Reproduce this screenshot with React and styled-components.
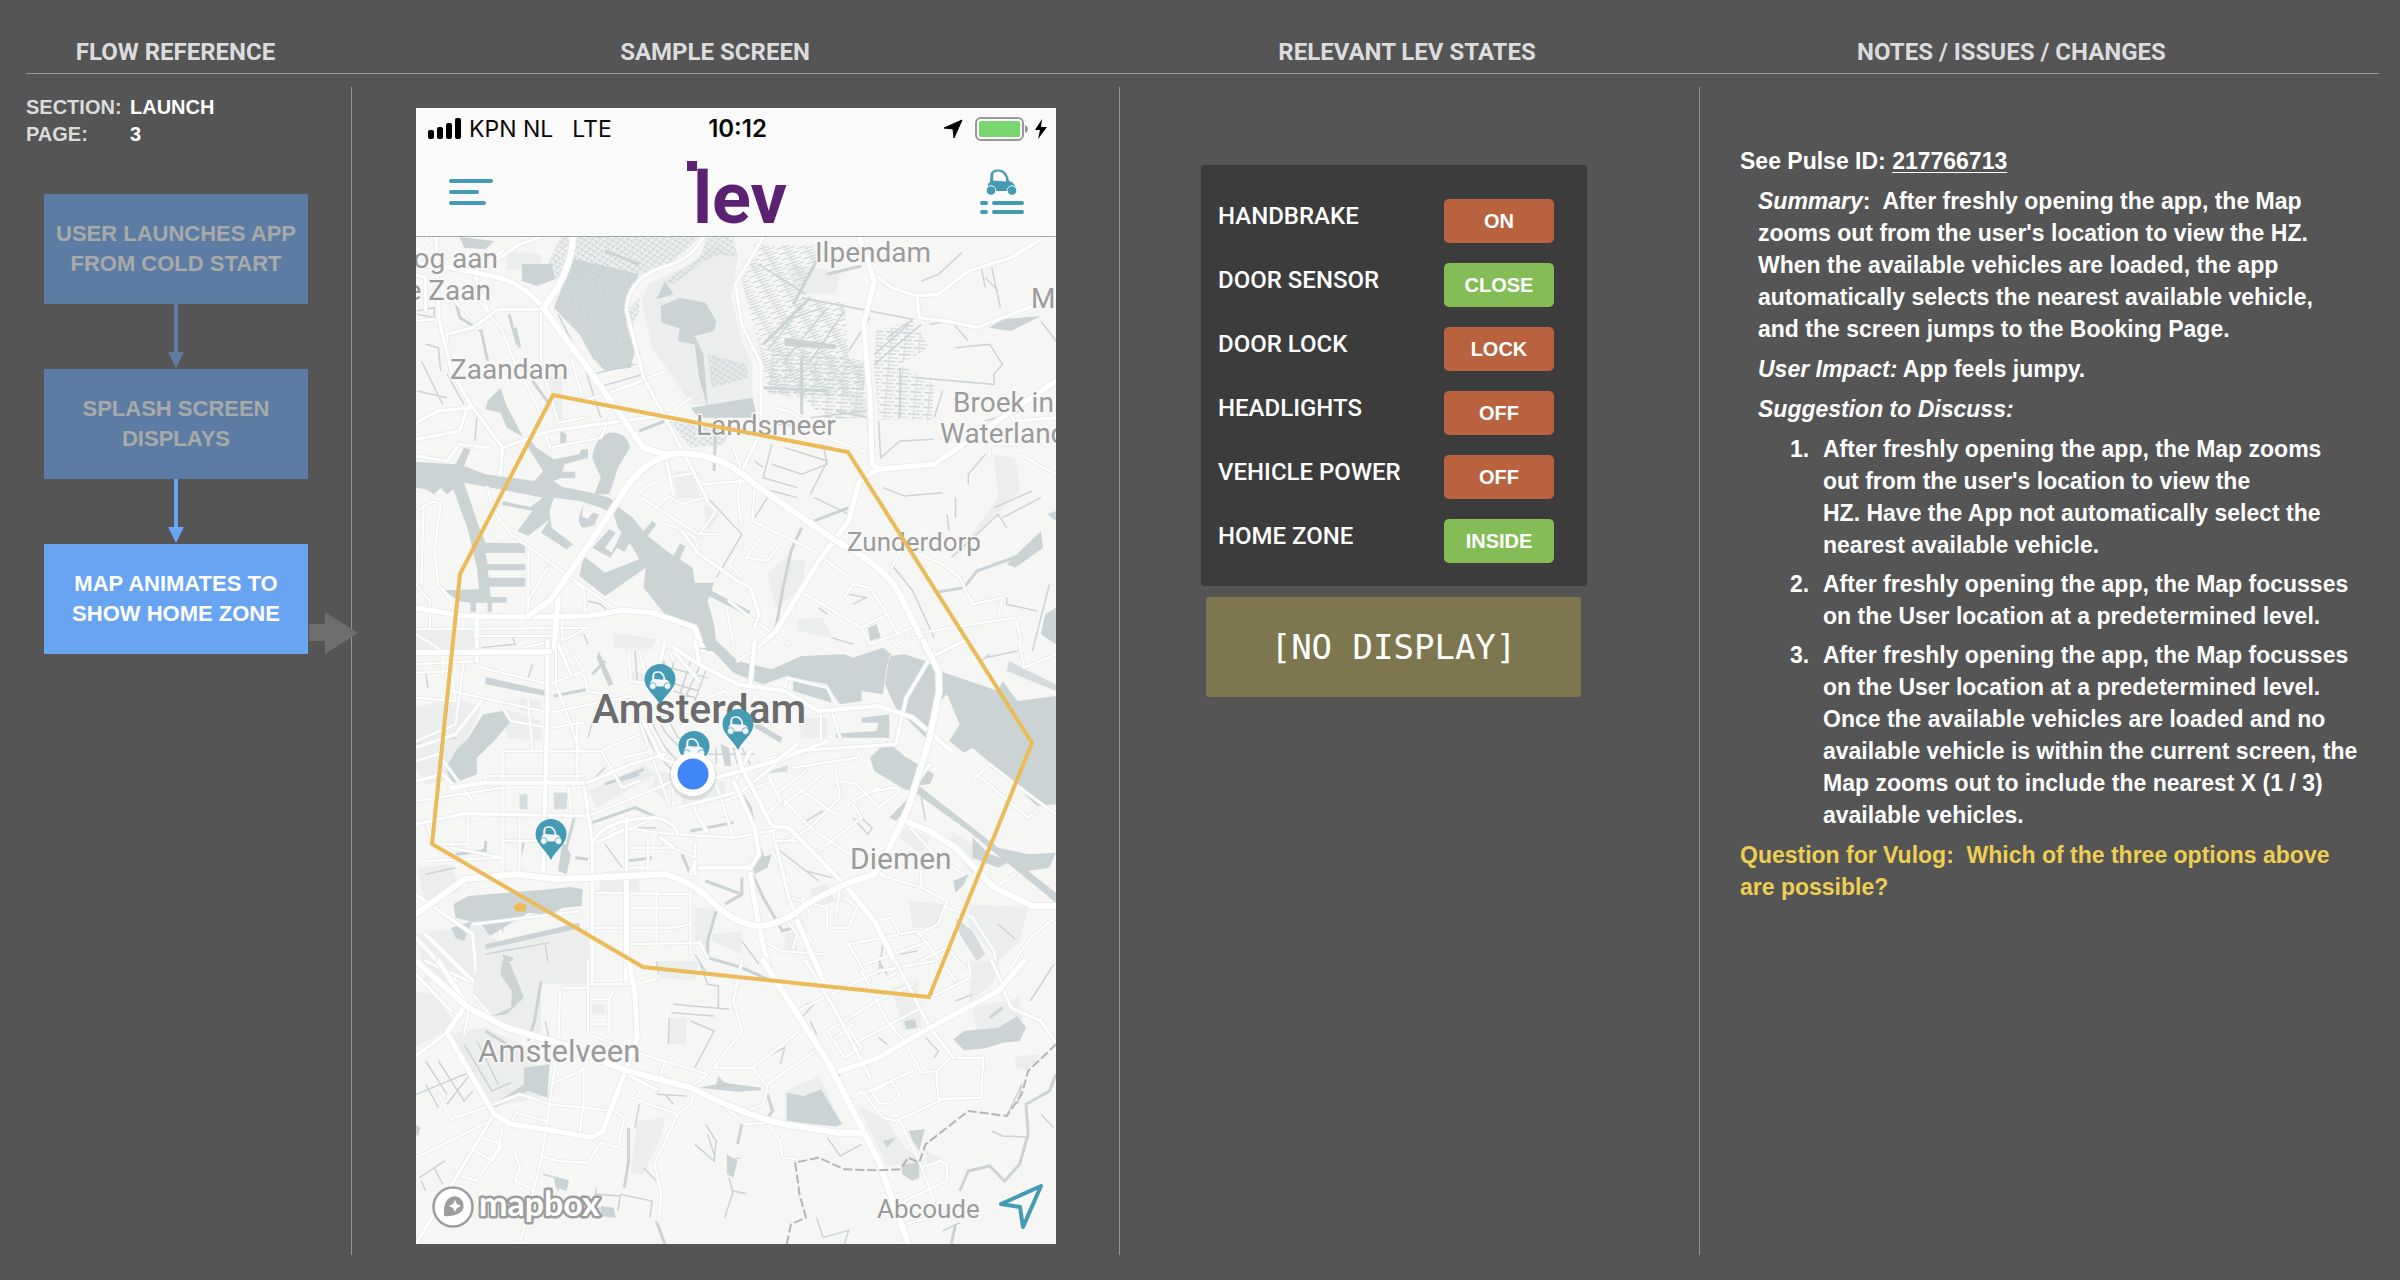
import React from "react";
import styled, { createGlobalStyle } from "styled-components";

const helvetica = `"Liberation Sans", Arial, sans-serif`;
const din = `Roboto, "Liberation Sans", sans-serif`;
const teal = "#459bb3";

const GlobalStyle = createGlobalStyle`
  *, *::before, *::after { box-sizing: border-box; }
  body { margin: 0; background: #555555; color: #ffffff; font-family: ${helvetica}; }
  h2, p, ol, ul, dl, dt, dd { margin: 0; padding: 0; }
  ul, ol { list-style: none; }
  svg { display: block; }
`;

const Page = styled.div`
  display: flex;
  flex-direction: column;
  min-height: 100vh;
  padding-bottom: 26px;
`;

const columns = `351fr 768fr 580fr 701fr`;

const HeaderRow = styled.header`
  position: relative;
  display: grid;
  grid-template-columns: ${columns};
  align-items: end;
  height: 74px;
  &::after {
    content: "";
    position: absolute;
    left: 26px;
    right: 21px;
    bottom: 0;
    height: 1px;
    background: #9b9b9b;
  }
`;

const Heading = styled.h2`
  padding: 0 ${(p) => p.$shift || 0}px 7px 0;
  font: 700 24px/30px ${din};
  color: #dcdcde;
  text-align: center;
  white-space: nowrap;
`;

const Columns = styled.main`
  display: grid;
  grid-template-columns: ${columns};
  flex: 1;
  margin-top: 13px;
`;

const Column = styled.section`
  min-width: 0;
  & + & {
    border-left: 1px solid #949494;
  }
`;

const FlowColumn = styled(Column)`
  padding: 7px 43px 0 26px;
`;
const ScreenColumn = styled(Column)`
  padding: 21px 62px 11px 64px;
`;
const StateColumn = styled(Column)`
  padding: 78px 112px 0 81px;
`;
const NotesColumn = styled(Column)`
  padding: 58px 40px 0;
`;

/* ---------- Flow reference ---------- */

const Meta = styled.dl`
  display: grid;
  grid-template-columns: 104px 1fr;
  font: 700 20px/27px ${helvetica};
  dt { color: #dcdcde; }
`;

const Flow = styled.div`
  display: flex;
  flex-direction: column;
  margin: 46px 0 0 18px;
`;

const Step = styled.div`
  position: relative;
  display: flex;
  align-items: center;
  justify-content: center;
  height: 110px;
  background: ${(p) => (p.$active ? "#69a4f3" : "#5d7ca4")};
  color: ${(p) => (p.$active ? "#ffffff" : "#a9a9a9")};
  font: 700 22px/30px ${helvetica};
  text-align: center;
`;

const DownArrow = styled.svg`
  align-self: center;
  width: 16px;
  height: 65px;
  fill: ${(p) => (p.$active ? "#69a4f3" : "#5d7ca4")};
`;

const NextArrow = styled.svg`
  position: absolute;
  left: calc(100% + 1px);
  bottom: 0;
  width: 49px;
  height: 42px;
  fill: #6e6e6e;
`;

/* ---------- Phone ---------- */

const Phone = styled.div`
  max-width: 640px;
  background: #fafafa;
  color: #0a0a0a;
`;

const StatusBar = styled.div`
  display: grid;
  grid-template-columns: 1fr auto 1fr;
  align-items: center;
  height: 41px;
  padding: 0 9px 0 12px;
  font: 400 23px/30px Inter, ${helvetica};
`;

const StatusGroup = styled.div`
  display: flex;
  align-items: center;
  gap: ${(p) => p.$gap}px;
  justify-content: ${(p) => (p.$end ? "flex-end" : "flex-start")};
`;

const Carrier = styled.span`
  margin-right: 12px;
`;

const Clock = styled.span`
  font-size: 24px;
  font-weight: 600;
`;

const AppBar = styled.div`
  display: grid;
  grid-template-columns: 1fr auto 1fr;
  align-items: center;
  height: 88px;
  padding: 0 30px 0 32px;
  border-bottom: 1px solid #a3a8a3;
`;

const IconButton = styled.button`
  display: block;
  justify-self: ${(p) => p.$side || "start"};
  padding: 0;
  border: 0;
  background: none;
`;

const Brand = styled.div`
  position: relative;
  padding: 12px 0 0 6px;
  font: 700 72px/68px ${din};
  color: #5c2272;
  &::before {
    content: "";
    position: absolute;
    left: 0;
    top: 8px;
    width: 10px;
    height: 10px;
    background: #5c2272;
  }
`;

const MapFrame = styled.div`
  position: relative;
  overflow: hidden;
`;

const MapSvg = styled.svg`
  width: 100%;
  height: auto;
  path { vector-effect: non-scaling-stroke; }
  .road { fill: none; stroke: #ffffff; stroke-linejoin: round; stroke-linecap: round; }
  .case { fill: none; stroke: #e9edeb; stroke-linejoin: round; stroke-linecap: round; }
  .water { fill: #cbd3d5; }
  .canal { fill: none; stroke: #cbd3d5; }
  .park { fill: #eceeed; }
  text { font-family: ${din}; paint-order: stroke; stroke: #f8f8f7; stroke-width: 3px; stroke-linejoin: round; }
`;

const Wordmark = styled.text`
  && {
    font-family: Lato, sans-serif;
    stroke: #9d9d9d;
    stroke-width: 5px;
  }
`;

const LocateButton = styled(IconButton)`
  position: absolute;
  right: 12px;
  bottom: 13px;
`;

/* ---------- States ---------- */

const Panel = styled.ul`
  display: flex;
  flex-direction: column;
  gap: 20px;
  padding: 34px 33px 23px 17px;
  background: #3c3c3c;
  border-radius: 3px;
`;

const StateRow = styled.li`
  display: flex;
  justify-content: space-between;
  align-items: flex-start;
`;

const StateName = styled.label`
  font: 500 24px/34px ${din};
  white-space: nowrap;
`;

const StateButton = styled.button`
  width: 110px;
  height: 44px;
  padding: 0;
  border: 0;
  border-radius: 5px;
  background: ${(p) => (p.$ok ? "#84bd56" : "#b86240")};
  color: #ffffff;
  font: 700 20px/27px ${helvetica};
`;

const Display = styled.div`
  display: flex;
  align-items: center;
  justify-content: center;
  height: 100px;
  margin: 11px 6px 0 5px;
  background: #7e764f;
  border-radius: 3px;
  font: 400 34px/40px "DejaVu Sans Mono", "Liberation Mono", monospace;
`;

/* ---------- Notes ---------- */

const Notes = styled.div`
  display: flex;
  flex-direction: column;
  gap: 8px;
  font: 700 23px/32px ${helvetica};
`;

const Indented = styled.p`
  padding-left: 18px;
`;

const PulseLink = styled.a`
  color: inherit;
  text-decoration: underline;
  text-decoration-thickness: 1px;
  text-underline-offset: 3px;
`;

const Options = styled.ol`
  display: flex;
  flex-direction: column;
  gap: 7px;
  padding-left: 50px;
  counter-reset: option;
  li {
    display: grid;
    grid-template-columns: 33px 1fr;
    counter-increment: option;
  }
  li::before {
    content: counter(option) ".";
  }
`;

const Question = styled.p`
  color: #edcf52;
`;

/* ---------- Drawings ---------- */

const Car = ({ fill, gap }) => (
  <g fill={fill}>
    <path
      fillRule="evenodd"
      d="M3 13 L3.500 5 Q5 .5 11 .5 Q18 0 21 8 L22 12 Q27 13 28.500 18 V22 H.5 Q0 14 3 13Z M6 11.500 L6.500 4 Q8 2.500 11 2.500 Q16 2 19 9 V12.500Z"
    />
    <circle cx="4" cy="21.500" r="4.800" stroke={gap} />
    <circle cx="25" cy="21.500" r="4.800" stroke={gap} />
  </g>
);

const Roads = ({ d, w = 3 }) => (
  <>
    <path className="case" d={d} strokeWidth={w + 2} />
    <path className="road" d={d} strokeWidth={w} />
  </>
);

const Pin = ({ x, y }) => (
  <g transform={`translate(${x} ${y})`}>
    <path
      d="M0 0 C-4 -9 -15.500 -16 -15.500 -25.500 A15.500 15.500 0 0 1 15.500 -25.500 C15.500 -16 4 -9 0 0Z"
      fill={teal}
    />
    <g transform="translate(-10 -34) scale(.7)">
      <Car fill="#f2f6f7" gap={teal} />
    </g>
  </g>
);

const labels = [
  ["og aan", 82, 31, 28, "end"],
  ["e Zaan", 75, 63, 28, "end"],
  ["Zaandam", 34, 142, 28],
  ["Landsmeer", 280, 198, 28],
  ["Ilpendam", 399, 25, 28],
  ["Mo", 615, 71, 28],
  ["Broek in", 537, 175, 28],
  ["Waterland", 524, 206, 28],
  ["Zunderdorp", 431, 314, 26],
  ["Diemen", 434, 632, 30],
  ["Amstelveen", 62, 825, 31],
  ["Abcoude", 461, 981, 26],
];

const North = () => (
  <g transform="translate(-16 -6) scale(.4273 .3333)">
    <path className="park" d="M565 210 L580 160 680 100 740 40 790 80 775 200 800 330 825 400 825 520 750 530 680 520 640 440 590 350Z M900 100 L1030 120 1020 190 930 190Z M1390 670 L1440 680 1450 780 1290 1000 1400 800Z M930 1165 L990 1160 1010 1220 930 1200Z M250 60 L330 70 330 100 250 120Z M350 430 L380 440 380 580 360 560Z M1050 500 L1095 500 1095 560 1060 560Z M37 1195 L180 1195 180 1260 37 1260Z M500 1205 L600 1225 590 1255 500 1250Z M860 1030 L900 980 950 990 940 1070 880 1130Z M640 720 L690 720 700 800 650 800Z M710 820 L750 850 720 900Z" />
    <path d="M400 80 L560 130 530 210 530 280 550 360 540 410 480 420 450 380 420 310 360 230 395 120Z" fill="url(#dense)" />
    <path d="M375 18 L700 18 Q640 110 560 130 L400 150 330 140 350 90Z" fill="url(#hatch)" />
    <path d="M720 18 L780 18 790 80 750 70 710 90 640 160 620 150 700 80Z" fill="url(#hatch)" />
    <path d="M830 40 L970 45 975 80 960 130 930 200 1040 215 1050 380 1090 390 1085 500 860 490 850 400 820 250 800 150Z" fill="url(#streak)" />
    <path d="M870 350 L980 360 1090 400 1090 560 1000 565 940 500 860 490Z M1115 300 L1200 270 1240 350 1170 400 1250 460 1245 570 1120 565 1110 420Z" fill="url(#rows)" />
    <path d="M720 370 L810 400 815 440 730 470Z M630 570 L770 600 760 640 680 650Z M560 200 L520 260 540 300 560 240Z" fill="url(#hatch)" />
    <path className="water" d="M37 693 L130 700 150 650 165 655 150 705 200 730 315 750 335 720 300 650 298 620 320 650 360 685 420 670 425 655 440 655 440 680 385 700 380 722 410 722 410 742 375 742 360 750 380 768 450 785 490 800 515 832 545 860 570 900 590 870 600 880 580 915 640 975 655 938 668 945 655 985 685 1010 690 1055 735 1055 720 1110 735 1180 742 1260 705 1260 690 1190 620 1150 570 1070 575 1010 480 1095 420 1035 430 975 480 1025 560 985 545 950 510 890 500 850 470 830 420 810 360 800 350 840 355 890 405 940 390 955 330 905 350 865 300 915 275 900 310 840 240 822 240 810 305 828 335 800 150 755 180 870 200 935 293 937 293 966 200 966 205 1000 293 1000 293 1018 205 1018 208 1040 293 1040 293 1067 210 1067 212 1098 250 1098 250 1115 215 1115 215 1142 205 1142 205 1115 178 1115 178 1142 165 1142 165 1115 135 1110 105 1078 185 1075 180 1010 160 900 125 775 110 790 95 770 80 790 60 775 37 770Z" />
    <path className="water" d="M450 950 L490 895 505 905 480 950 495 965 520 900 538 935 525 962 508 950 492 980Z M430 820 Q408 880 430 890 L455 882 465 850 450 845 440 865 425 855Z M490 605 Q530 600 538 650 L510 710 490 790 455 790 470 740 450 680 Q455 620 490 605Z M235 470 L248 520 288 618 250 590 235 545 200 535 205 510Z M285 100 L355 98 362 145 320 165 285 150Z M610 225 L655 200 715 215 740 270 735 300 690 315 710 370 720 530 700 440 690 340 650 330 655 292 612 275Z M140 18 L220 30 200 55 150 50Z M600 205 L620 150 640 190Z M680 530 L825 500 835 560 700 560Z M1420 1000 L1500 900 1505 950 1440 1010Z M1355 310 L1410 265 1500 255 1430 300 1380 290Z M1510 1150 L1535 1130 1535 1240 1500 1210Z M1515 850 L1535 840 1535 870Z M1095 1190 L1115 1180 1125 1220 1100 1230Z M700 1060 L820 1140 815 1155 700 1080Z M375 600 L390 610 388 645 375 640Z M900 320 L1020 340 1020 355 900 345Z" />
    <path className="canal" strokeWidth="3" d="M130 210 L140 260 190 300 205 390 M255 250 L275 340 M310 450 L350 520 M560 600 L620 570 M880 1190 L895 1080 915 960 940 890 M1250 1085 L1320 1070 1350 1020 1480 960 M740 540 L735 720 M1000 130 L1080 105 M280 350 L270 290 M970 870 L1050 830 M975 90 L920 220 M850 340 L960 200 M940 380 L940 550 M850 470 L1000 480 M560 100 L480 60" />
    <path className="canal" strokeWidth="1.500" d="M370 250 L430 400 470 560 M40 240 L80 230 80 260 40 250 M60 340 L90 350 95 420 M50 390 L100 520 M40 480 L110 500 M110 430 L150 520 M990 640 L1000 700 940 730 870 700 M870 640 L850 740 930 770 M900 650 L1000 690 960 790 M970 800 L1050 850 M830 860 L870 780 930 800 M720 800 L800 910 750 1020 740 1040 M1150 1000 L1200 1080 1250 1220 M1120 570 L1125 680 1170 630 1250 625 M1170 410 L1170 560 M1210 440 L1390 460 1390 430 1410 400 1380 340 1300 350 M1330 760 L1330 730 1370 670 M1130 770 L1180 795 1270 785 M1220 150 L1260 130 1315 65 M1360 110 L1370 170 M1385 110 L1405 230 M1400 180 L1370 140 M1280 850 L1285 900 M1300 800 L1300 860 M1420 1100 L1420 1120 1490 1140 M1520 1060 L1480 1260 M1010 1220 L1060 1240 M980 1130 L1000 1150 M1050 1090 L1090 1100 1060 1120 M830 690 L850 710 M260 1210 L270 1240 190 1250 M440 1110 L470 1120 490 1145 M430 1210 L440 1240 M450 430 L550 400 M460 470 L570 430 M940 200 L1100 240 1200 265 1140 320 M1290 980 L1400 850 1420 890 M1390 830 L1480 780 M1410 860 L1500 800 M1500 270 L1535 330 M1370 570 L1450 540 M180 560 L175 630 M1270 480 L1250 560 M1240 280 L1290 270 1330 330 M1110 400 L1220 280 M1110 370 L1190 280 M860 360 L920 260 990 230 M900 390 L1000 230 M960 390 L1040 240 M1050 360 L1100 260 M1020 540 L1095 560 1095 600 M960 560 L1090 540 M880 580 L1000 590 M840 100 L950 190" />
    <Roads w={2} d="M37 270 L80 265 110 320 120 420 165 520 M170 120 L210 250 240 300 270 400 320 520 350 650 470 620 490 560 M330 230 L330 400 370 575 430 560 M400 380 L430 510 M120 200 L190 290 110 310 M60 18 L120 110 M180 140 L180 200 210 250 M430 510 L570 450 M480 490 L620 420 M560 790 Q570 750 690 725 M565 800 L600 830 700 910 745 910 M600 830 L630 795 660 820 710 800 L740 840 700 910 M690 725 L710 760 800 750 830 760 825 870 M780 650 L800 720 790 800 800 880 M825 870 L970 960 1050 1040 M700 960 L690 920 650 890 620 880 M850 910 L810 980 860 990 890 940 M800 940 L770 1000 800 1040 M935 1080 L1080 1190 1140 1150 1100 1070 1060 1060 1040 1100 M1080 1190 L1100 1240 1200 1190 M1140 1150 L1165 1210 M1150 1010 L1200 900 M1200 960 L1270 1000 1310 1040 1340 1120 1410 1100 1400 1160 M1200 1210 L1340 1180 1440 1160 1460 1260 M230 860 L260 910 400 1040 510 1140 M205 770 Q220 860 250 890 M300 960 L300 1150 M400 1040 L430 1075 435 1155 M345 1010 L300 1110 M360 1150 L355 1230 290 1250 M380 1150 L380 1230 440 1190 M40 840 Q90 790 95 830 L80 960 90 1060 120 1110 M55 830 L50 1060 M37 1060 L70 1110 70 1190 M37 1195 L440 1190 M930 1080 L920 1150 M770 1110 L830 1170 910 1240 M765 1130 L780 1240 M1450 670 L1535 730 M1380 680 L1380 640 1450 640 M870 530 L910 540 1000 620 1090 665 M640 540 L680 500 M37 1210 L100 1260 M180 1215 L360 1215 360 1260" />
    <Roads w={3} d="M110 310 L170 290 230 235 335 235 M240 650 L350 600 520 570 640 550 M850 18 L785 160 800 280 845 400 845 600 800 720 M710 18 Q680 90 610 110 Q530 150 530 240 L570 440 620 560 690 730 720 810 M1100 120 L1150 170 1210 195 1260 190 1330 120 1430 80 1500 25 M1210 195 L1215 260 1280 270 1350 290 1450 240 1535 200 M85 18 L90 260 120 420 165 520 240 650 235 730 M37 625 L140 600 155 540 165 520 M37 675 L110 690 140 640 210 650 M660 900 L700 970 790 1050 820 1070 840 1150 830 1190 M37 575 L90 540 165 530 M240 60 L180 115 M37 130 L60 140 60 240 M330 18 L280 40 200 110 M620 670 L640 790 M1420 540 L1440 570 1535 560" />
    <Roads w={5} d="M37 100 L120 110 230 140 Q290 160 335 230 M37 1130 L150 1155 300 1158 440 1155 520 1138 590 1145 690 1190 710 1260 M180 1160 L180 1260 M370 1100 L360 1260 M1075 18 L1110 150 1085 280 1100 500 1105 700 1120 715 1250 700 1535 450 M1120 715 L1075 750 1050 870 980 990 880 1200 830 1260" />
    <Roads w={6} d="M405 18 Q400 120 350 205 L335 230 380 310 450 430 520 560 570 650 620 670 Q740 650 830 760 L1020 930 Q1130 1000 1170 1090 L1235 1260 M640 670 Q560 690 510 810 L400 1020 350 1110 300 1155" />
  </g>
);

const Center = () => (
  <g transform="translate(-16 404) scale(.4273 .3333)">
    <path className="park" d="M37 200 L130 170 190 200 110 420 60 430 37 380Z M240 200 L330 240 330 300 250 290Z M440 450 L570 370 600 400 460 500Z M40 680 L120 670 140 750 60 790Z M230 900 L440 860 445 1020 60 1020 40 880 180 850Z M730 880 L800 870 800 940 730 900Z M960 740 L1000 730 1020 780 970 800Z M1190 780 L1280 790 1260 860 1200 860Z M1330 790 L1470 800 1450 900 1400 960 1330 850Z M1290 570 L1350 620 1340 700 1290 620Z M930 230 L1000 230 1000 290 940 290Z M660 450 L760 420 760 470 660 490Z M600 390 L640 400 620 480 590 440Z M1180 560 L1240 590 1220 640 1170 590Z M280 170 L330 180 330 210 280 210Z M530 90 L600 100 580 130 540 130Z M900 880 L930 870 930 930 900 940Z M690 800 L740 800 720 940 690 900Z M480 690 L560 690 560 760 460 760Z" />
    <path className="water" d="M705 0 L740 40 780 95 850 130 905 105 1000 135 1030 190 1080 180 1080 150 1130 160 1140 70 1150 40 1130 20 1060 50 1040 40 940 45 870 85 790 60 742 0Z M1135 130 L1145 45 1180 40 1230 60 1275 95 1400 150 1410 120 1445 180 1535 165 1535 490 1490 495 1430 420 1340 320 1320 335 1285 300 1310 250 1280 160 1250 200 1230 290 1160 200Z M920 110 L1000 130 1010 185 920 150Z M1080 230 L1145 220 1145 290 1020 290 1020 278 1115 270 1120 245 1080 245Z M1100 350 L1140 300 1180 345 1250 400 1240 430 1212 432 1300 520 1400 620 1470 640 1535 635 1520 680 1470 690 1535 755 1535 785 1330 570 1200 450 1180 445 1110 390Z M240 210 L260 240 220 300 180 350 180 400 120 430 108 380 130 330 160 290 195 220Z M200 108 L345 150 340 165 200 130Z M125 790 L160 765 250 755 350 745 400 738 428 745 425 795 380 800 350 822 300 815 210 885 190 850 130 830Z M200 910 L420 845 420 862 200 925Z M465 30 L500 130 488 135 460 50Z M820 660 L870 640 860 680 830 700Z M1145 530 L1190 470 1190 500 1160 540Z M1295 720 L1330 700 1320 730 1300 755Z M240 940 L265 950 262 990 280 1010 250 1020Z M380 600 L400 640 390 700 370 690Z M120 860 L170 840 150 900 130 890Z M750 310 L770 320 775 375 760 375Z M830 240 L895 290 890 305 830 260Z M1340 590 L1380 640 1430 660 1400 680 1340 650Z" />
    <path className="water" opacity=".75" d="M280 460 L298 460 298 505 280 505Z M360 455 L392 455 390 505 360 505Z M200 840 L205 880 210 840 216 885 222 838 228 885 235 835 240 880 250 830Z M865 390 L910 372 905 392 870 396Z M1300 830 L1340 870 1370 940 1350 960 1310 880Z M1425 60 L1535 130 1535 150 1420 90Z" />
    <path className="canal" strokeWidth="3" d="M780 420 L820 500 835 600 850 650 M825 700 L850 770 895 870 920 860 M800 710 L800 760 760 790 M715 720 L800 760 M740 810 L720 900 720 950 800 980 870 1020 M450 545 L550 500 620 540 650 570 M480 430 L570 385 M510 420 L560 400 M360 165 L440 145 M450 100 L480 60 M680 570 L780 545 M410 520 L385 640 M530 660 L590 650 M410 650 L440 655 M200 600 L200 630 130 640 M290 600 L280 650 M660 640 L680 700 M610 50 L640 120" />
    <path className="canal" strokeWidth="1.500" d="M570 240 Q580 330 650 400 M590 240 Q610 320 660 370 M610 250 Q630 300 680 340 M630 240 L650 290 700 300 M550 30 L555 120 M640 60 L630 140 M680 60 L650 180 M700 80 L660 190 M715 90 L690 180 M630 80 L720 110 M620 120 L700 150 M640 150 L690 170 M740 320 L740 370 M780 320 L790 370 M800 320 L820 370 M720 340 L830 340 M460 200 L440 290 M480 380 L440 430 M560 560 L600 560 M880 620 L950 690 1010 710 M900 740 L920 780 M940 680 L980 720 M1060 530 L1095 580 1105 560 1070 520 M1380 40 L1360 60 M1370 50 L1445 30 M1220 470 L1230 540 M1120 970 L1140 1000 M1170 940 L1210 930 M1400 850 L1440 895 M200 940 L350 905 M340 910 L350 1000 M800 900 L840 970 M690 940 L720 1000 M1440 295 L1530 285 M40 310 L130 290 M60 95 L65 140 M310 70 L300 110 M480 610 L520 680 M60 700 L130 680 M180 640 L200 620 M1130 910 L1120 1000 M690 20 L760 30 M950 540 L990 510" />
    <Roads w={2} d="M37 70 L180 60 190 80 350 130 M37 95 L120 90 130 180 37 170 M100 30 L100 100 M120 150 L350 215 540 165 560 235 M235 190 L260 240 350 260 430 245 M300 180 L310 330 M240 330 L470 330 560 280 M240 330 L240 690 M200 405 L430 405 M200 405 L200 430 M415 230 L415 430 M365 30 L365 130 400 250 420 330 M430 100 L440 150 500 165 M350 130 L430 90 400 30 M150 60 L130 250 37 300 M37 360 L90 340 170 480 M37 480 L240 440 M60 540 L80 610 160 610 160 520 M120 620 L240 650 60 660 M240 600 L340 600 M280 520 L280 690 M400 520 L395 440 M440 525 L490 500 640 420 M450 610 L530 560 600 575 650 580 780 590 910 560 M450 610 L600 530 M580 590 L580 700 M530 620 L640 620 690 650 M610 570 L620 610 M530 680 L580 680 M450 755 L680 760 M530 800 L660 800 M600 750 L600 900 M450 860 L640 860 680 850 M530 910 L700 905 M680 720 L680 940 M690 610 L690 700 M715 570 L700 530 690 510 690 490 M470 330 L520 440 560 420 M520 350 L590 330 M640 510 L640 440 M560 240 L630 490 M740 430 L780 590 M760 480 L870 420 M850 370 L890 480 860 520 M800 390 L870 350 960 330 M880 460 L950 390 M900 480 L960 560 1030 470 1020 390 M900 490 L990 400 M930 440 L1020 520 M960 560 L910 600 M980 630 L1080 530 1060 490 M960 560 L1040 630 1130 700 M1030 420 L1070 430 1120 500 1170 450 1160 440 1110 450 M1060 480 L1120 440 M1080 310 L1070 350 920 380 M1010 210 L1030 290 M985 210 L985 300 M900 150 L905 110 1000 140 1020 190 M640 60 L630 30 M560 30 L575 100 M580 240 L640 380 M535 30 L540 120 580 130 M700 180 L760 150 790 200 M630 220 L760 200 M790 60 L860 0 M870 550 L880 630 M880 600 L940 600 M870 630 L910 720 M910 770 L1000 800 1000 860 1050 860 1070 800 1040 770 M940 760 L960 820 M1030 740 L1020 830 M1090 790 L1110 840 1150 830 1170 880 M1120 700 L1220 740 1280 780 M1220 740 L1220 690 M1050 910 L1210 870 1300 1020 M1050 910 L1100 1020 M1090 970 L1240 900 M1140 1010 L1280 920 1320 980 M1280 780 L1260 850 1210 880 M1280 800 L1340 830 1390 930 1400 1000 M1340 420 L1380 370 1450 440 1535 520 M1350 400 L1470 530 1490 510 M1180 540 L1250 640 1320 700 M1450 0 L1460 80 1535 40 M1390 740 L1440 700 M1535 830 Q1450 900 1420 1020 M1170 20 L1150 0 M170 850 L420 810 M700 900 L720 950 M850 900 L890 930 990 940 M900 830 L930 880 920 920 M700 530 L720 570 M150 740 L160 720" />
    <Roads w={3} d="M430 430 L540 370 620 340 M430 430 L450 600 450 1020 M37 550 L150 518 440 525 M450 605 Q480 530 600 530 Q640 540 650 580 M650 500 L800 450 920 330 1160 310 1185 170 1250 30 M570 240 L610 350 690 390 M620 0 L610 60 M640 30 L700 120 M530 530 L530 700 M690 700 L690 660 M905 350 L1000 300 M370 10 L400 100 M37 420 L100 400 130 440 M37 760 L170 880 180 1020 M37 320 L130 280 190 180 M1240 50 L1320 0 M820 330 L780 430 M880 610 L910 770 930 830 960 900 M680 700 L690 660 M610 590 L640 620 M1240 370 L1200 440" />
    <Roads w={4} d="M120 440 L200 425 430 425 M345 0 L345 200 340 440 335 690 M640 20 L700 70 790 130 900 150 980 210 1120 195 1200 230 1290 330 M790 330 L800 380 870 555 910 560 1040 730 M700 680 L820 680 840 640 830 560 780 420 M740 410 L880 360 930 310 M37 890 L130 1020 M60 880 L170 1020 M180 60 L180 0 M690 0 L700 60 M830 0 L820 130" />
    <Roads w={5} d="M37 35 L350 32 M820 700 L840 860 870 1020 M1040 730 L1110 840 1180 1020 M530 1020 L530 700 M930 840 L990 1020" />
    <Roads w={6} d="M1225 0 L1260 90 1262 150 1240 290 1190 500 1130 660 1110 700 1040 730 M1190 545 L1240 570 1300 620 1390 740 1480 795 1535 795 M37 820 L150 715 270 700 370 715 620 700 Q680 720 720 770 Q780 850 840 855 Q900 850 950 790 L1040 730" />
  </g>
);

const South = () => (
  <g transform="translate(-16 724) scale(.4273 .3333)">
    <path className="park" d="M180 0 L440 0 440 70 330 70 330 230 220 190 170 100Z M37 90 L80 100 130 190 37 260Z M110 220 L200 200 300 260 350 400 220 440Z M555 480 L620 470 610 530 570 640 540 640Z M630 170 L670 170 670 250 630 250Z M900 390 L980 345 1030 480 900 470Z M1070 430 L1140 480 1180 560 1230 600 1140 615Z M1150 80 L1210 60 1220 200 1180 210Z M1340 0 L1400 0 1390 60 1330 130Z M1340 140 L1450 110 1460 200 1350 210Z M1440 285 L1500 280 1470 330 1440 320Z M600 0 L700 0 690 60 610 50Z M450 130 L480 130 480 160 450 160Z M1230 570 L1265 590 1235 620Z" />
    <path className="water" d="M905 395 L945 405 985 385 1035 490 1020 497 905 480Z M1295 235 L1320 210 1400 200 1445 165 1465 200 1450 240 1410 245 1370 262 1320 268Z M290 320 L350 310 345 410 300 390 220 440 225 425 290 370Z M1175 610 L1215 605 1215 650 1200 660 1175 640Z M255 0 L275 60 290 110 250 160 215 165 260 140 262 90 235 40 240 0Z M1190 510 L1228 505 1215 570 1200 540Z M1130 540 L1160 530 1140 560Z M765 580 L790 600 780 650 765 640Z M1180 180 L1205 175 1210 200 1185 205Z M745 345 L760 365 845 380 845 388 790 392 700 380 740 370Z M37 490 L48 500 42 525 37 520Z M1015 330 L1035 330 1020 375Z M360 650 L395 660 390 690 365 680Z M470 735 L500 740 505 770 470 765Z" />
    <path className="canal" strokeWidth="3" d="M620 850 L600 780 M860 400 L872 450 860 470 M330 60 L315 180 300 240 M535 500 L535 600 525 680 M1535 340 L1520 390 1465 430 1470 520 1450 610 1415 660 1380 615 1330 630 1310 690 M800 490 L790 550 M1410 140 L1380 170 M200 210 L250 250 M1300 790 L1290 850" />
    <path className="canal" strokeWidth="1.500" d="M640 130 L770 145 M635 155 L735 165 M630 170 L628 250 M680 180 L735 210 690 320 M700 0 L720 70 745 75 745 140 M150 250 L215 390 260 365 M180 240 L230 370 M37 400 L170 330 110 430 M60 300 L110 400 M90 300 L150 420 170 390 M60 370 L90 440 M45 650 L105 600 M50 660 L60 690 M80 620 L100 670 M335 640 L395 660 M370 650 L370 690 M460 680 L450 770 M515 700 L590 720 585 770 M460 700 L515 705 510 750 M440 740 L500 745 M460 760 L500 762 M600 400 L670 405 M620 400 L640 430 M715 490 L740 540 735 600 690 550 M720 520 L735 580 M760 770 L780 690 810 698 M770 650 L780 700 M770 600 L795 590 M1000 530 L1030 585 1080 550 M870 280 L900 260 890 310 M950 130 L975 120 940 170 M960 180 L975 220 M1120 230 L1140 250 M1230 230 L1260 270 1250 290 M1385 510 L1410 525 1470 528 M1420 465 L1455 370 1445 430 M1500 460 L1530 500 M1300 120 L1340 100 M1530 10 L1475 120 M990 830 L975 770 M990 830 L1050 808 1040 850 M1270 810 L1310 785 M340 180 L350 240 M560 430 L550 500 M570 620 L600 660 M1120 0 L1140 40 M600 0 L605 40" />
    <Roads w={2} d="M380 80 L440 80 M375 85 L370 250 350 430 330 600 280 850 M440 70 L550 70 600 55 M440 0 L440 220 550 270 M450 115 L490 115 490 220 M450 190 L490 190 M490 115 L500 90 M430 320 L430 430 420 520 M360 365 L430 325 M220 430 L280 400 350 430 500 450 525 470 510 560 470 545 440 605 370 600 330 585 M260 490 L270 455 340 480 M90 400 L120 475 220 430 M37 590 L210 480 M200 490 L190 530 240 550 215 600 170 565 M170 570 L130 640 180 660 210 600 240 550 M190 690 L170 760 M270 575 L280 620 270 660 310 685 M240 500 L230 560 M550 390 L540 410 650 460 M620 300 L600 390 M555 275 L720 340 M720 340 L690 370 M735 320 L825 320 860 380 850 430 810 450 M825 320 L935 210 M970 270 L860 370 M800 0 L780 120 800 210 735 320 M690 380 L680 430 650 460 595 610 612 700 605 780 M720 400 L810 490 860 485 890 540 895 590 930 595 M930 150 L1000 105 1120 30 1250 0 M1000 210 L1130 110 1200 70 M1000 210 L1040 290 1080 260 1020 150 M1060 250 L1220 140 M1080 30 L1140 180 1180 240 M1020 230 L1060 190 M1080 390 L1130 470 1160 480 1280 410 M1080 400 L1200 330 M1110 390 L1150 360 1170 400 1150 430 1120 425 1100 385 M1060 410 L1080 390 M1170 480 L1215 600 1250 720 M1180 720 L1280 660 1280 610 1265 600 1220 620 M1180 720 L1190 750 M1180 790 L1240 770 M1330 0 L1335 50 1240 110 M1290 290 L1365 290 1360 410 1260 415 1255 330 M1180 240 L1220 335 1255 330 1290 290 M170 100 L210 160 M150 220 L160 150" />
    <Roads w={3} d="M37 850 L220 460 M37 285 L110 215 M950 0 L1020 150 1100 350 M1160 0 L1240 200 1295 290 M60 0 L160 60 M1385 0 L1410 70 M1410 80 L1430 140 1500 180 1535 245 M530 340 L600 385 M37 40 L120 150" />
    <Roads w={5} d="M90 0 L155 130 110 215 220 460 260 490 340 505 450 530 475 510 530 320 555 230 550 100 535 0 M1030 330 L1120 290 1240 200 1400 90 1460 0" />
    <Roads w={6} d="M37 0 L160 140 250 200 380 250 520 325 680 380 Q820 470 900 490 L1020 515 1080 515 M850 0 L1000 300 1060 450 1120 600 1190 850" />
    <path d="M905 850 L915 790 950 770 935 700 925 605 980 590 1040 625 1120 628 1170 625 1190 590 1215 605 1230 550 1330 450 1420 465 1455 400 1470 330 1535 250" fill="none" stroke="#b5b5b5" strokeWidth="2" strokeDasharray="9 3" />
  </g>
);

const CityMap = () => (
  <MapSvg viewBox="0 0 640 1007" role="img" aria-label="Map of the Amsterdam home zone">
    <defs>
      <pattern id="dense" width="13" height="7" patternUnits="userSpaceOnUse" patternTransform="rotate(-12)">
        <rect width="13" height="7" fill="#cbd3d5" />
        <rect width="8" height="1" fill="#e3e8e8" />
        <rect x="6" y="4" width="5" height="1" fill="#e3e8e8" />
      </pattern>
      <pattern id="hatch" width="13" height="13" patternUnits="userSpaceOnUse" patternTransform="rotate(38)">
        <rect width="11" height="4" fill="#c8d1d3" />
        <rect x="3" y="7" width="9" height="3" fill="#ced6d8" />
      </pattern>
      <pattern id="streak" width="46" height="17" patternUnits="userSpaceOnUse" patternTransform="rotate(-24)">
        <rect width="34" height="3" fill="#c8d1d3" />
        <rect x="14" y="8" width="30" height="3" fill="#ced6d8" />
        <rect x="20" width="2" height="17" fill="#d2dadb" />
      </pattern>
      <pattern id="rows" width="34" height="22" patternUnits="userSpaceOnUse" patternTransform="rotate(4)">
        <rect width="28" height="4" fill="#c8d1d3" />
        <rect x="10" y="12" width="24" height="3" fill="#ced6d8" />
        <rect x="12" width="2" height="22" fill="#d2dadb" />
      </pattern>
    </defs>
    <rect width="640" height="1007" fill="#f6f6f5" />
    <North />
    <Center />
    <South />
    {labels.map(([name, x, y, size, anchor]) => (
      <text key={name} x={x} y={y} fontSize={size} textAnchor={anchor} fill="#9b9b9b">
        {name}
      </text>
    ))}
    <path
      d="M137 158 L432 215 L616 506 L513 760 L227 730 L16 607 L44 337Z"
      fill="none"
      stroke="#ebbb5a"
      strokeWidth="4"
    />
    <text x="176" y="486" fontSize="41" fontWeight="500" fill="#6c6c6e">
      Amsterdam
    </text>
    <path d="M99 670 L103 667 L109 669 L108 673 L101 673Z" fill="#ebbb5a" stroke="#ebbb5a" strokeWidth="3" />
    <Pin x={244} y={468} />
    <Pin x={322} y={513} />
    <Pin x={278} y={535} />
    <Pin x={135} y={623} />
    <circle cx="277" cy="539" r="24" fill="#000000" opacity=".08" />
    <circle cx="277" cy="537" r="22" fill="#ffffff" />
    <circle cx="277" cy="537" r="15.500" fill="#4086f7" />
    <circle cx="37" cy="970" r="19.500" fill="#ffffff" stroke="#9d9d9d" strokeWidth="2.500" />
    <path d="M28 979 Q27 967 32 962 Q38 957 44 961 Q50 967 46 974 Q40 980 28 979Z" fill="#9d9d9d" />
    <path d="M39 963 L41 967 L45 969 L41 971 L39 975 L37 971 L33 969 L37 967Z" fill="#ffffff" />
    <Wordmark x="63" y="979" fontSize="34" fontWeight="700" fill="#ffffff">
      mapbox
    </Wordmark>
  </MapSvg>
);

const PhoneScreen = () => (
  <Phone>
    <StatusBar>
      <StatusGroup $gap={7}>
        <svg width="34" height="21" aria-hidden="true">
          <rect x="0" y="12" width="6" height="9" rx="2" />
          <rect x="9" y="9" width="6" height="12" rx="2" />
          <rect x="18" y="5" width="6" height="16" rx="2" />
          <rect x="27" y="0" width="6" height="21" rx="2" />
        </svg>
        <Carrier>KPN NL</Carrier>
        <span>LTE</span>
      </StatusGroup>
      <Clock>10:12</Clock>
      <StatusGroup $end $gap={6}>
        <svg width="20" height="20" aria-hidden="true">
          <path d="M19 1 L11 19 L10 10 L1 9Z" stroke="#0a0a0a" strokeLinejoin="round" />
        </svg>
        <svg width="60" height="24" aria-hidden="true">
          <rect x="7" y="1" width="47" height="22" rx="5" fill="none" stroke="#979797" strokeWidth="2" />
          <rect x="10" y="4" width="41" height="16" rx="2" fill="#78d76f" />
          <path d="M56 8 Q59 9 59 12 Q59 15 56 16Z" fill="#979797" />
        </svg>
        <svg width="12" height="20" aria-hidden="true">
          <path d="M7 0 L0 11 H5 L3 20 L12 8 H6Z" />
        </svg>
      </StatusGroup>
    </StatusBar>
    <AppBar>
      <IconButton type="button" aria-label="Menu">
        <svg width="46" height="30" stroke={teal} strokeWidth="4" strokeLinecap="round">
          <path d="M3 3 H43 M3 14 H29 M3 25 H36" />
        </svg>
      </IconButton>
      <Brand>lev</Brand>
      <IconButton type="button" aria-label="Vehicle list" $side="end">
        <svg width="46" height="58">
          <g transform="translate(7 5)">
            <Car fill={teal} gap="#fafafa" />
          </g>
          <path d="M2 39 H6 M14 39 H42 M2 48 H6 M14 48 H42" stroke={teal} strokeWidth="4" strokeLinecap="round" />
        </svg>
      </IconButton>
    </AppBar>
    <MapFrame>
      <CityMap />
      <LocateButton type="button" aria-label="Show my location">
        <svg width="46" height="48" fill="none" stroke={teal} strokeWidth="4" strokeLinejoin="round">
          <path d="M43 3 L25 44 L22 24 L3 21Z" />
        </svg>
      </LocateButton>
    </MapFrame>
  </Phone>
);

const states = [
  ["HANDBRAKE", "ON", false],
  ["DOOR SENSOR", "CLOSE", true],
  ["DOOR LOCK", "LOCK", false],
  ["HEADLIGHTS", "OFF", false],
  ["VEHICLE POWER", "OFF", false],
  ["HOME ZONE", "INSIDE", true],
];

const Arrow = ({ active }) => (
  <DownArrow $active={active} viewBox="0 0 16 65" aria-hidden="true">
    <path d="M6 0 H10 V48 H16 L8 64 L0 48 H6Z" />
  </DownArrow>
);

export default function App() {
  return (
    <Page>
      <GlobalStyle />
      <HeaderRow>
        <Heading>FLOW REFERENCE</Heading>
        <Heading $shift={40}>SAMPLE SCREEN</Heading>
        <Heading $shift={4}>RELEVANT LEV STATES</Heading>
        <Heading $shift={76}>NOTES / ISSUES / CHANGES</Heading>
      </HeaderRow>
      <Columns>
        <FlowColumn>
          <Meta>
            <dt>SECTION:</dt>
            <dd>LAUNCH</dd>
            <dt>PAGE:</dt>
            <dd>3</dd>
          </Meta>
          <Flow>
            <Step>
              USER LAUNCHES APP
              <br />
              FROM COLD START
            </Step>
            <Arrow />
            <Step>
              SPLASH SCREEN
              <br />
              DISPLAYS
            </Step>
            <Arrow active />
            <Step $active>
              MAP ANIMATES TO
              <br />
              SHOW HOME ZONE
              <NextArrow viewBox="0 0 49 42" aria-hidden="true">
                <path d="M0 12 H16 V0 L49 21 L16 42 V29 H0Z" />
              </NextArrow>
            </Step>
          </Flow>
        </FlowColumn>
        <ScreenColumn>
          <PhoneScreen />
        </ScreenColumn>
        <StateColumn>
          <Panel>
            {states.map(([name, value, ok], i) => (
              <StateRow key={name}>
                <StateName htmlFor={`state-${i}`}>{name}</StateName>
                <StateButton id={`state-${i}`} type="button" $ok={ok}>
                  {value}
                </StateButton>
              </StateRow>
            ))}
          </Panel>
          <Display>[NO DISPLAY]</Display>
        </StateColumn>
        <NotesColumn>
          <Notes>
            <p>
              See Pulse ID: <PulseLink href="#217766713">217766713</PulseLink>
            </p>
            <Indented>
              <em>Summary</em>:&nbsp; After freshly opening the app, the Map zooms out from the user's location to view
              the HZ. When the available vehicles are loaded, the app automatically selects the nearest available
              vehicle, and the screen jumps to the Booking Page.
            </Indented>
            <Indented>
              <em>User Impact:</em> App feels jumpy.
            </Indented>
            <Indented>
              <em>Suggestion to Discuss:</em>
            </Indented>
            <Options>
              <li>
                After freshly opening the app, the Map zooms out from the user's location to view the
                HZ.&nbsp;Have&nbsp;the App not automatically select the nearest available vehicle.
              </li>
              <li>
                After freshly opening the app, the Map focusses on the User location at a predetermined level.
              </li>
              <li>
                After freshly opening the app, the Map focusses on the User location at a predetermined level. Once the
                available vehicles are loaded and no available vehicle is within the current screen, the Map zooms out
                to include the nearest X (1 / 3) available vehicles.
              </li>
            </Options>
            <Question>Question for Vulog:&nbsp; Which of the three options above are possible?</Question>
          </Notes>
        </NotesColumn>
      </Columns>
    </Page>
  );
}
